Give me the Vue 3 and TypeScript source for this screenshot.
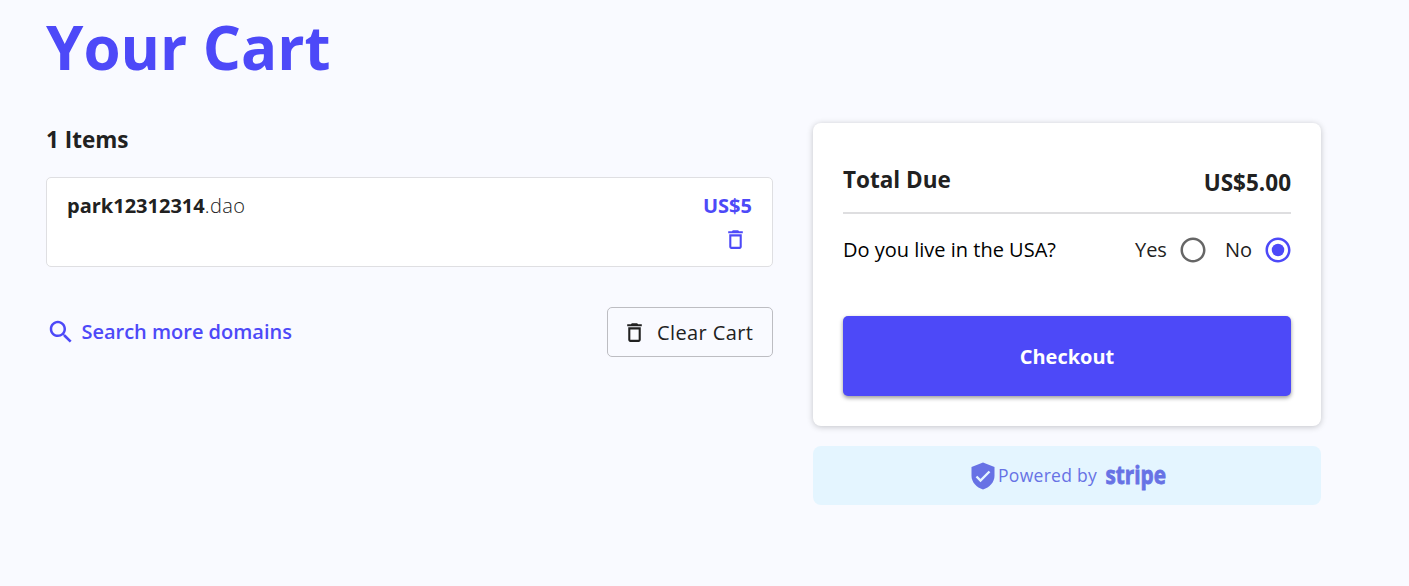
<script setup lang="ts">
import { ref } from 'vue'

interface CartItem {
  name: string
  tld: string
  price: number
}

const items = ref<CartItem[]>([{ name: 'park12312314', tld: '.dao', price: 5 }])
const residence = ref<'Yes' | 'No'>('No')
const options = ['Yes', 'No'] as const
const trashPath = 'M6 19c0 1.1.9 2 2 2h8c1.1 0 2-.9 2-2V7H6v12zM8 9h8v10H8V9zm7.5-5l-1-1h-5l-1 1H5v2h14V4z'
</script>

<template>
  <main class="page">
    <h1 class="title">Your Cart</h1>
    <div class="columns">
      <section class="cart">
        <h2 class="count">{{ items.length }} Items</h2>
        <article v-for="item in items" :key="item.name" class="item">
          <div class="domain"><b>{{ item.name }}</b><span>{{ item.tld }}</span></div>
          <div class="item-side">
            <span class="price">US${{ item.price }}</span>
            <button class="remove" aria-label="Remove">
              <svg viewBox="0 0 24 24" width="25" height="25"><path :d="trashPath" /></svg>
            </button>
          </div>
        </article>
        <div class="actions">
          <a class="search">
            <svg viewBox="0 0 24 24" width="30" height="30"><path d="M15.5 14h-.79l-.28-.27C15.41 12.59 16 11.11 16 9.5 16 5.91 13.09 3 9.5 3S3 5.91 3 9.5 5.91 16 9.5 16c1.61 0 3.09-.59 4.23-1.57l.27.28v.79l5 4.99L20.49 19l-4.99-5zm-6 0C7.01 14 5 11.99 5 9.5S7.01 5 9.5 5 14 7.01 14 9.5 11.99 14 9.5 14z" /></svg>
            <span>Search more domains</span>
          </a>
          <button class="clear">
            <svg viewBox="0 0 24 24" width="25" height="25"><path :d="trashPath" /></svg>
            <span>Clear Cart</span>
          </button>
        </div>
      </section>
      <aside class="summary">
        <div class="card">
          <div class="total">
            <span class="total-label">Total Due</span>
            <span class="total-value">US$5.00</span>
          </div>
          <div class="question">
            <span class="question-text">Do you live in the USA?</span>
            <label v-for="o in options" :key="o" class="option" @click="residence = o">
              <span>{{ o }}</span>
              <svg viewBox="0 0 24 24" width="30" height="30" :class="{ on: residence === o }">
                <path d="M12 2C6.48 2 2 6.48 2 12s4.48 10 10 10 10-4.48 10-10S17.52 2 12 2zm0 18c-4.42 0-8-3.58-8-8s3.58-8 8-8 8 3.58 8 8-3.58 8-8 8z" />
                <circle v-if="residence === o" cx="12" cy="12" r="5" />
              </svg>
            </label>
          </div>
          <button class="checkout">Checkout</button>
        </div>
        <div class="powered">
          <svg class="shield" viewBox="0 0 24 28" width="24" height="28">
            <path d="M12 .5 23.5 5v9c0 6-5 11.500-11.500 13.500C5.500 25.500.5 20 .5 14V5z" />
            <path class="tick" d="M5.500 14.500 9.500 18.500 18.500 9.500" />
          </svg>
          <span class="powered-text">Powered by</span>
          <svg class="stripe" viewBox="0 0 66 44" width="66" height="44">
            <text x="1.500" y="29.700" textLength="60.500" lengthAdjust="spacingAndGlyphs">stripe</text>
          </svg>
        </div>
      </aside>
    </div>
  </main>
</template>

<style>
body {
  background: #f9faff;
}
</style>

<style scoped>
.page {
  box-sizing: border-box;
  height: 586px;
  padding: 12px 88px 0 46px;
  overflow: hidden;
  background: #f9faff;
  color: #212121;
  font-family: "Open Sans", sans-serif;
  font-size: 20px;
}
button {
  font: inherit;
  border: 0;
  padding: 0;
  background: none;
}
svg {
  display: block;
  flex: none;
  fill: currentColor;
}
.title {
  margin: 0;
  font-size: 60px;
  font-weight: 700;
  line-height: 70px;
  color: #4d49f8;
}
.columns {
  display: flex;
  justify-content: space-between;
  margin-top: 41px;
}
.cart {
  width: 727px;
  padding-top: 2px;
}
.count {
  margin: 0 0 22px;
  font-size: 22.5px;
  font-weight: 700;
  line-height: 30px;
}
.item {
  box-sizing: border-box;
  height: 90px;
  padding: 13px 20px 0;
  display: flex;
  justify-content: space-between;
  background: #fff;
  border: 1px solid #dfdfe2;
  border-radius: 5px;
  line-height: 30px;
}
.domain b {
  font-weight: 700;
}
.domain span {
  font-weight: 300;
  letter-spacing: 0.4px;
}
.item-side {
  display: flex;
  flex-direction: column;
  align-items: flex-end;
}
.price {
  font-weight: 700;
  color: #4d49f8;
}
.remove {
  margin: 6px 4px 0 0;
  color: #4d49f8;
}
.actions {
  display: flex;
  justify-content: space-between;
  align-items: center;
  margin-top: 40px;
  height: 50px;
}
.search {
  display: flex;
  align-items: center;
  gap: 5.4px;
  color: #4d49f8;
  font-weight: 600;
}
.search span {
  margin-bottom: 2px;
}
.clear {
  box-sizing: border-box;
  width: 166px;
  height: 50px;
  display: flex;
  align-items: center;
  gap: 10px;
  padding-left: 14px;
  border: 1px solid #bdbdc2;
  border-radius: 5px;
  color: #212121;
  font-weight: 500;
  letter-spacing: 0.4px;
}
.summary {
  width: 508px;
}
.card {
  box-sizing: border-box;
  height: 303px;
  padding: 30px;
  background: #fff;
  border-radius: 8px;
  box-shadow: 0 1px 6px rgba(0, 0, 0, 0.22);
}
.total {
  box-sizing: border-box;
  height: 61px;
  display: flex;
  justify-content: space-between;
  padding-top: 12px;
  border-bottom: 2px solid #dedee0;
  font-size: 22.5px;
  font-weight: 700;
  line-height: 30px;
}
.total-value {
  padding-top: 3px;
}
.question {
  display: flex;
  align-items: center;
  height: 72px;
  color: #212121;
}
.question-text {
  margin-right: auto;
  color: #000;
  font-weight: 400;
}
.question span {
  margin-bottom: 2px;
}
.option {
  display: flex;
  align-items: center;
  gap: 11px;
  margin-left: 18px;
}
.option span {
  font-weight: 400;
}
.option svg {
  color: #666;
}
.option:last-child {
  margin-left: 17px;
  margin-right: -2px;
}
.option svg.on {
  color: #4d49f8;
}
.checkout {
  display: block;
  width: 100%;
  height: 80px;
  margin-top: 30px;
  border-radius: 5px;
  background: #4d49f8;
  color: #fff;
  font-weight: 700;
  box-shadow: 0 2px 4px rgba(0, 0, 0, 0.4);
}
.powered {
  height: 59px;
  margin-top: 20px;
  display: flex;
  align-items: center;
  border-radius: 8px;
  background: #e4f5ff;
  color: #6772e5;
  font-size: 17.5px;
  font-weight: 500;
}
.shield {
  margin-left: 158px;
}
.shield .tick {
  fill: none;
  stroke: #e4f5ff;
  stroke-width: 2.4;
}
.powered-text {
  width: 103px;
  margin: 0 0 1px 3px;
  letter-spacing: 0.3px;
  white-space: nowrap;
}
.stripe {
  margin-left: 3px;
  overflow: visible;
}
.stripe text {
  font-size: 25px;
  font-weight: 700;
  stroke: currentColor;
  stroke-width: 0.8px;
}
</style>
